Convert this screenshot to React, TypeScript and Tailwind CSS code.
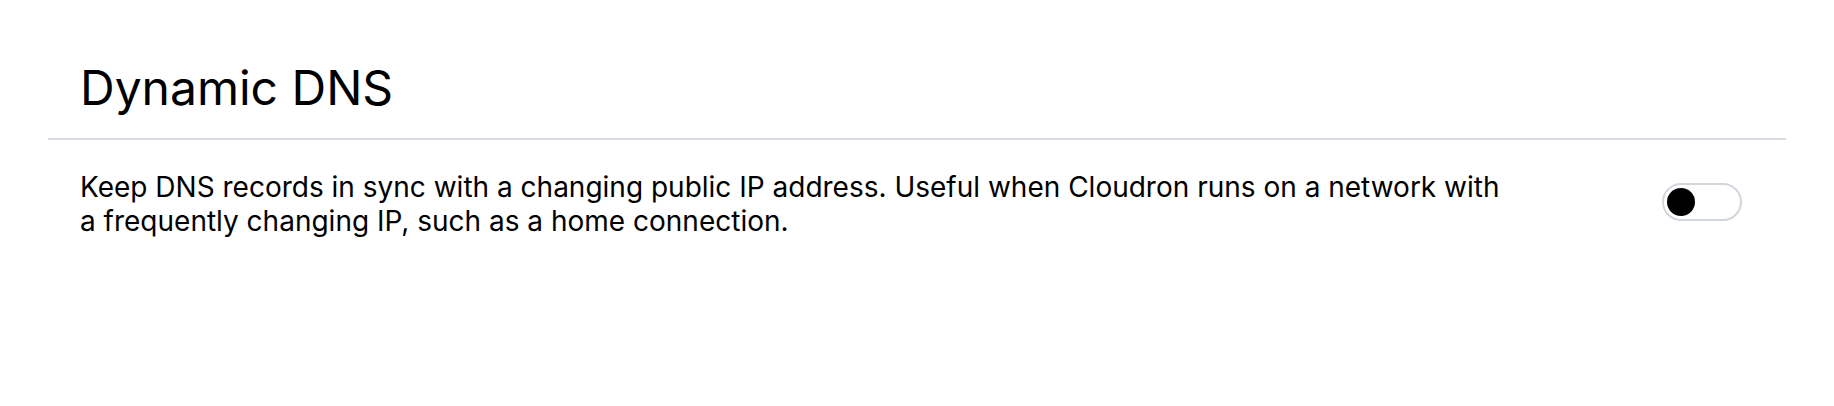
import React, { useState } from 'react';

const Toggle: React.FC<{ on: boolean; onChange: (v: boolean) => void }> = ({ on, onChange }) => (
  <button
    type="button"
    role="switch"
    aria-checked={on}
    onClick={() => onChange(!on)}
    className={`mb-1 flex h-[38px] w-[80px] shrink-0 items-center rounded-full border-2 border-[#d1d6dd] bg-white px-[3px] ${on ? 'justify-end' : 'justify-start'}`}
  >
    <span className="block h-7 w-7 rounded-full bg-black" />
  </button>
);

const App: React.FC = () => {
  const [enabled, setEnabled] = useState(false);

  return (
    <div className="min-h-screen bg-white px-12 font-['Inter','Liberation_Sans',sans-serif] text-black">
      {/* Section title */}
      <div className="px-8 pt-16 pb-[26px]">
        <h1 className="text-5xl leading-none font-normal">Dynamic DNS</h1>
      </div>
      <div className="border-t-2 border-[#d8dce2]" />

      {/* Setting row */}
      <div className="flex items-center justify-between gap-8 pt-[30px] pl-8 pr-11">
        <p className="max-w-[1430px] text-[28px] leading-[34px]">
          Keep DNS records in sync with a changing public IP address. Useful when Cloudron runs on a network with a frequently changing IP, such as a home connection.
        </p>
        <Toggle on={enabled} onChange={setEnabled} />
      </div>
    </div>
  );
};

export default App;
